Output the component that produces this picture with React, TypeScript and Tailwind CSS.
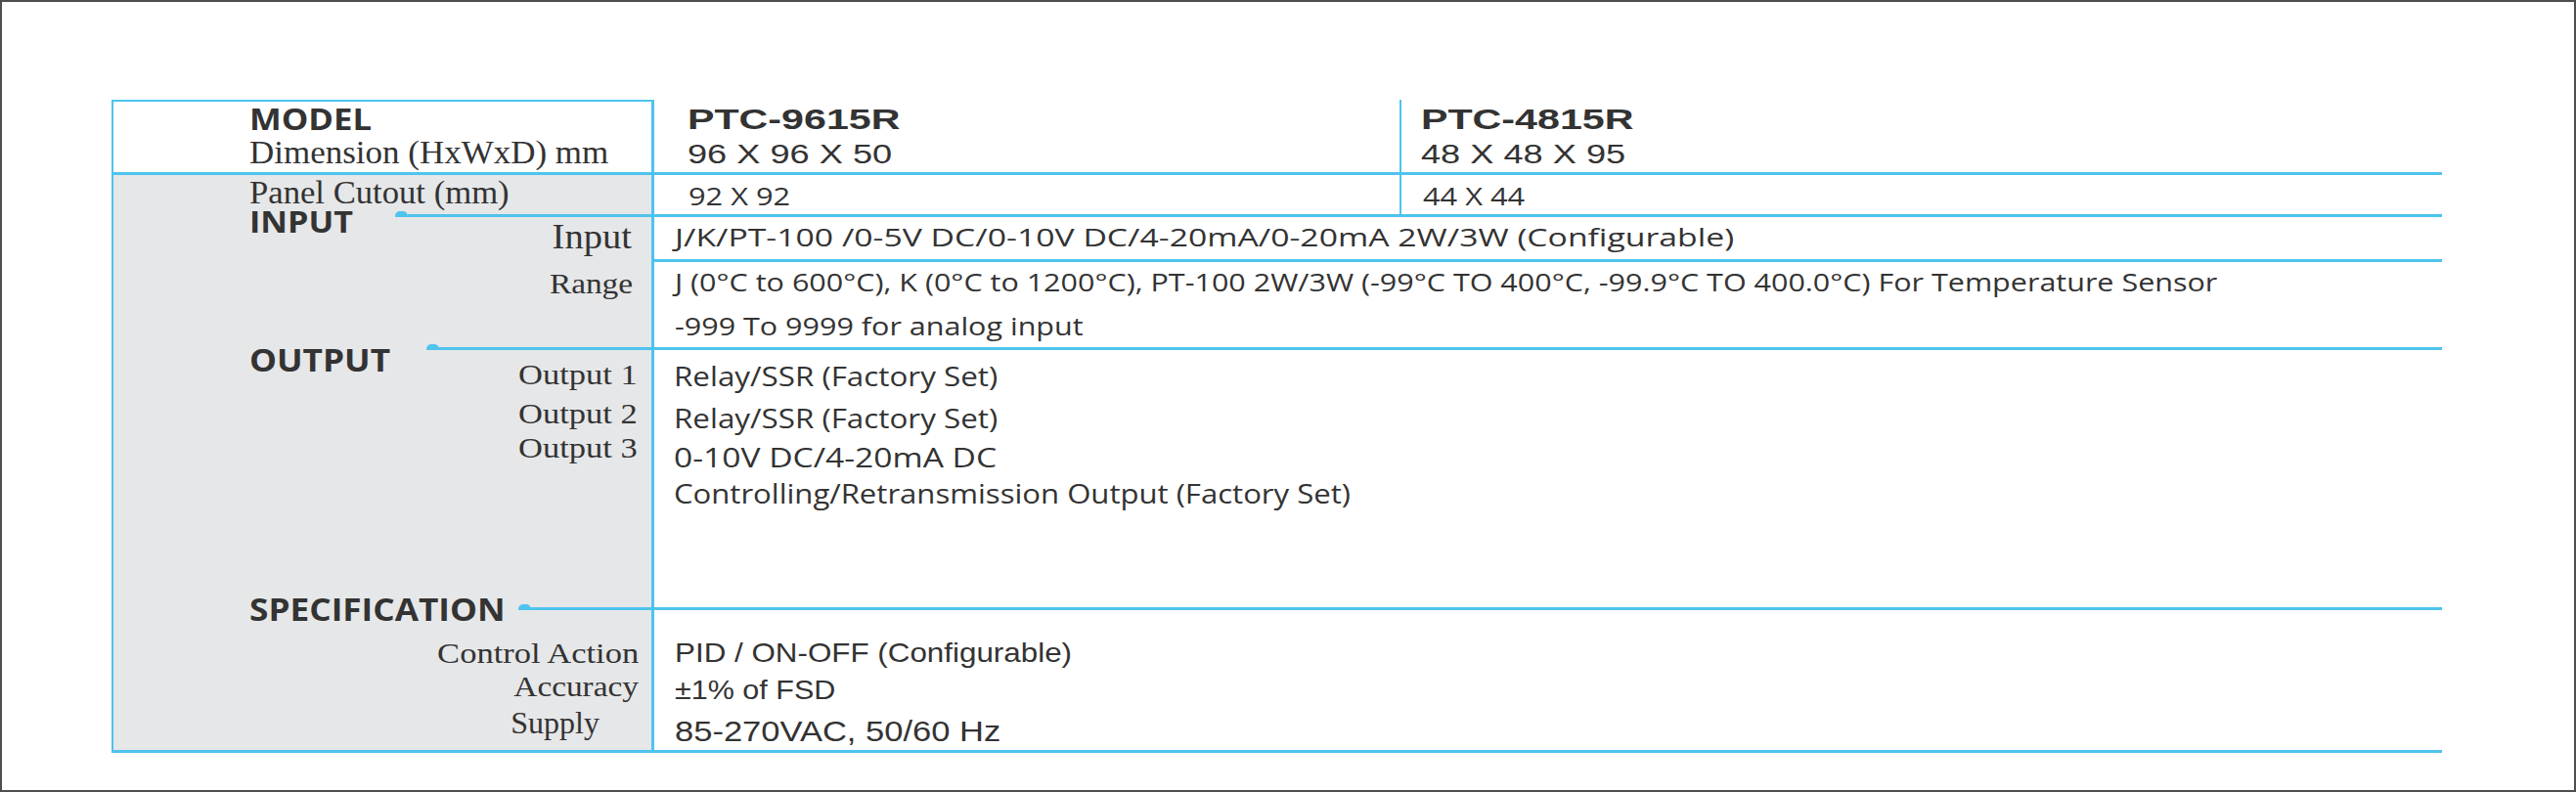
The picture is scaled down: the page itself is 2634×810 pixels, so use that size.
import * as React from 'react';
import clsx from 'clsx';

const OPEN = "font-['Open_Sans',sans-serif]";
const ARIAL = "font-['Liberation_Sans',Arial,sans-serif]";
const SERIF = "font-['Liberation_Serif','Times_New_Roman',serif]";

type Props = { className?: string; children: React.ReactNode };

// the sheet's type is stretched sideways, so each run of text gets its own scale-x
function Wide({ className, children }: Props) {
  return (
    <span className={clsx('inline-block whitespace-nowrap', className)}>
      {children}
    </span>
  );
}

function LabelCell({ className, children }: Props) {
  return (
    <div className={clsx('border-l-2 border-[#4ec3ee] bg-[#e6e7e8]', className)}>
      {children}
    </div>
  );
}

function ValueCell({ className, children }: Props) {
  return (
    <div className={clsx('border-l-[3px] border-[#4ec3ee] bg-white', className)}>
      {children}
    </div>
  );
}

function SectionLine({ label, boxClass }: { label: string; boxClass: string }) {
  return (
    <div className="grid h-[3px] grid-cols-[552px_1fr] grid-rows-[3px]">
      <LabelCell className="flex h-[3px] items-start pl-[139px]">
        <div className={clsx('shrink-0 leading-[24px] font-bold text-[#333]', OPEN, boxClass)}>
          <Wide className="origin-left scale-x-[1.1]">{label}</Wide>
        </div>
        <div className="flex h-[3px] flex-1 items-center">
          <span className="h-[10px] w-[13px] shrink-0 rounded-full bg-[#4ec3ee]" />
          <span className="h-[3px] flex-1 bg-[#4ec3ee]" />
        </div>
      </LabelCell>
      <div className="h-[3px] bg-[#4ec3ee]" />
    </div>
  );
}

function ModelRow() {
  return (
    <div className="grid h-[74px] grid-cols-[552px_1fr]">
      <div className="border-l-2 border-t-2 border-[#4ec3ee] bg-white pl-[139px] text-[#333]">
        <div className={clsx('text-[31px] leading-[34px] font-bold', OPEN)}>
          <Wide className="origin-left scale-x-[1.12]">MODEL</Wide>
        </div>
        <div className={clsx('mt-[1px] text-[33px] leading-[34px]', SERIF)}>
          <Wide className="origin-left scale-x-[1.06]">Dimension (HxWxD) mm</Wide>
        </div>
      </div>
      <ValueCell className="flex text-[#333]">
        <ModelHead name="PTC-9615R" size="96 X 96 X 50" className="w-[762px] pl-[34px]" />
        <ModelHead name="PTC-4815R" size="48 X 48 X 95" className="flex-1 border-l-2 border-[#4ec3ee] pl-[20px]" />
      </ValueCell>
    </div>
  );
}

function ModelHead({ name, size, className }: { name: string; size: string; className: string }) {
  return (
    <div className={clsx('pt-[3px]', ARIAL, className)}>
      <div className="text-[29px] leading-[34px] font-bold">
        <Wide className="origin-left scale-x-[1.42]">{name}</Wide>
      </div>
      <div className="mt-[2px] text-[27px] leading-[34px]">
        <Wide className="origin-left scale-x-[1.34]">{size}</Wide>
      </div>
    </div>
  );
}

function CutoutRow() {
  return (
    <div className="grid h-[40px] grid-cols-[552px_1fr] text-[#333]">
      <LabelCell className={clsx('pl-[139px] pt-[1px] text-[33px] leading-[34px]', SERIF)}>
        <Wide className="origin-left scale-x-[1.05]">Panel Cutout (mm)</Wide>
      </LabelCell>
      <ValueCell className={clsx('flex text-[25px] leading-[34px]', OPEN)}>
        <div className="w-[762px] pl-[35px] pt-[4px]">
          <Wide className="origin-left scale-x-[1.23]">92 X 92</Wide>
        </div>
        <div className="flex-1 border-l-2 border-[#4ec3ee] pl-[22px] pt-[4px]">
          <Wide className="origin-left scale-x-[1.23]">44 X 44</Wide>
        </div>
      </ValueCell>
    </div>
  );
}

function InputRows() {
  return (
    <>
      <div className="grid h-[46px] grid-cols-[552px_1fr] text-[#333]">
        <LabelCell className={clsx('pr-[20px] pt-[3px] text-right text-[35px] leading-[36px]', SERIF)}>
          <Wide className="origin-right scale-x-[1.1]">Input</Wide>
        </LabelCell>
        <ValueCell className={clsx('border-b-[3px] pl-[21px] pt-[3px] text-[25px] leading-[34px]', OPEN)}>
          <Wide className="origin-left scale-x-[1.35]">
            J/K/PT-100 /0-5V DC/0-10V DC/4-20mA/0-20mA 2W/3W (Configurable)
          </Wide>
        </ValueCell>
      </div>
      <div className="grid h-[87px] grid-cols-[552px_1fr] text-[#333]">
        <LabelCell className={clsx('pr-[19px] pt-[4px] text-right text-[29px] leading-[36px]', SERIF)}>
          <Wide className="origin-right scale-x-[1.15]">Range</Wide>
        </LabelCell>
        <ValueCell className={clsx('pl-[21px] pt-[5px] text-[25px] leading-[30px]', OPEN)}>
          <div>
            <Wide className="origin-left scale-x-[1.22]">
              J (0°C to 600°C), K (0°C to 1200°C), PT-100 2W/3W (-99°C TO 400°C, -99.9°C TO 400.0°C) For Temperature Sensor
            </Wide>
          </div>
          <div className="mt-[15px]">
            <Wide className="origin-left scale-x-[1.22]">-999 To 9999 for analog input</Wide>
          </div>
        </ValueCell>
      </div>
    </>
  );
}

function OutputRows() {
  return (
    <div className="grid h-[263px] grid-cols-[552px_1fr] text-[#333]">
      <LabelCell className={clsx('pr-[14px] pt-[7px] text-right text-[30px] leading-[36px]', SERIF)}>
        <div>
          <Wide className="origin-right scale-x-[1.15]">Output 1</Wide>
        </div>
        <div className="mt-[4px]">
          <Wide className="origin-right scale-x-[1.15]">Output 2</Wide>
        </div>
        <div className="-mt-[1px]">
          <Wide className="origin-right scale-x-[1.15]">Output 3</Wide>
        </div>
      </LabelCell>
      <ValueCell className={clsx('pl-[20px] pt-[8px] text-[28px] leading-[36px]', OPEN)}>
        <div>
          <Wide className="origin-left scale-x-[1.12]">Relay/SSR (Factory Set)</Wide>
        </div>
        <div className="mt-[7px]">
          <Wide className="origin-left scale-x-[1.12]">Relay/SSR (Factory Set)</Wide>
        </div>
        <div className="mt-[4px]">
          <Wide className="origin-left scale-x-[1.2]">0-10V DC/4-20mA DC</Wide>
        </div>
        <div className="mt-[1px]">
          <Wide className="origin-left scale-x-[1.11]">Controlling/Retransmission Output (Factory Set)</Wide>
        </div>
      </ValueCell>
    </div>
  );
}

function SpecRows() {
  return (
    <div className="grid h-[143px] grid-cols-[552px_1fr] text-[#333]">
      <LabelCell className={clsx('pt-[27px] text-right leading-[34px]', SERIF)}>
        <div className="pr-[13px] text-[30px]">
          <Wide className="origin-right scale-x-[1.15]">Control Action</Wide>
        </div>
        <div className="pr-[13px] text-[30px]">
          <Wide className="origin-right scale-x-[1.11]">Accuracy</Wide>
        </div>
        <div className="mt-[3px] pr-[53px] text-[32px]">
          <Wide className="origin-right">Supply</Wide>
        </div>
      </LabelCell>
      <ValueCell className={clsx('pl-[21px] pt-[27px] leading-[34px]', ARIAL)}>
        <div className="text-[28px]">
          <Wide className="origin-left scale-x-[1.12]">PID / ON-OFF (Configurable)</Wide>
        </div>
        <div className="mt-[4px] text-[28px]">
          <Wide className="origin-left scale-x-[1.09]">±1% of FSD</Wide>
        </div>
        <div className="mt-[8px] text-[29px]">
          <Wide className="origin-left scale-x-[1.19]">85-270VAC, 50/60 Hz</Wide>
        </div>
      </ValueCell>
    </div>
  );
}

export default function App() {
  return (
    <div className="h-[810px] w-[2634px] overflow-hidden border-2 border-[#4d4d4d] bg-white">
      <div className="ml-[112px] mt-[100px] w-[2383px]">
        <ModelRow />
        <div className="h-[3px] bg-[#4ec3ee]" />
        <CutoutRow />
        <SectionLine label="INPUT" boxClass="-mt-[5px] w-[149px] text-[31px]" />
        <InputRows />
        <SectionLine label="OUTPUT" boxClass="mt-[1px] w-[181px] text-[32px]" />
        <OutputRows />
        <SectionLine label="SPECIFICATION" boxClass="-mt-[10px] w-[275px] text-[32px]" />
        <SpecRows />
        <div className="h-[3px] bg-[#4ec3ee]" />
      </div>
    </div>
  );
}
